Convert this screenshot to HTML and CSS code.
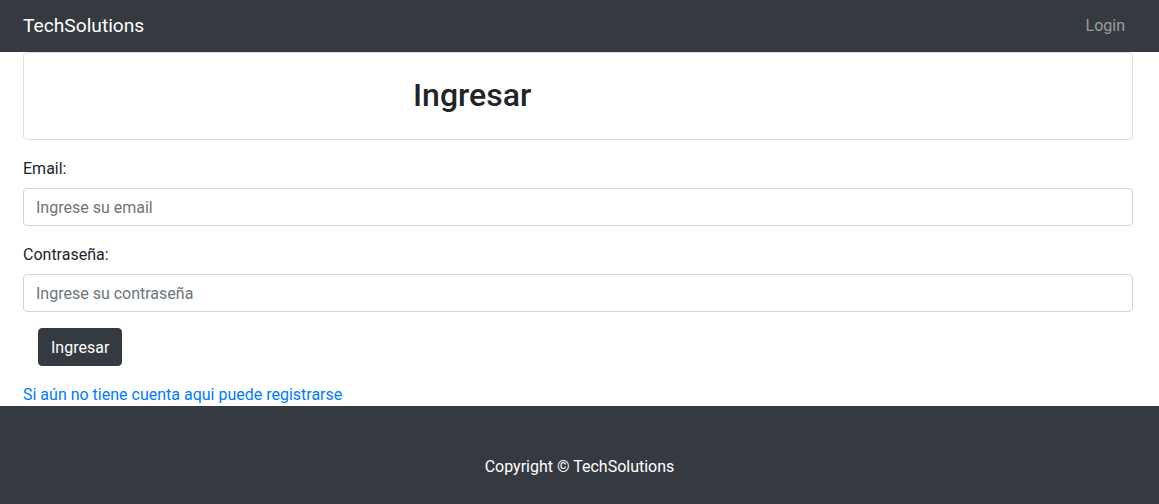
FILE: index.html
```html
<!DOCTYPE html>
<html lang="es">
<head>
<meta charset="utf-8">
<title>TechSolutions - Ingresar</title>
<link rel="stylesheet" href="styles.css">
</head>
<body>
<nav class="navbar">
  <a class="brand" href="#">TechSolutions</a>
  <a class="nav-link" href="#">Login</a>
</nav>
<main class="content">
  <div class="card">
    <h2 class="card-title">Ingresar</h2>
  </div>
  <form class="login-form">
    <div class="form-group">
      <label for="email">Email:</label>
      <input id="email" type="email" class="form-control" placeholder="Ingrese su email">
    </div>
    <div class="form-group">
      <label for="pass">Contraseña:</label>
      <input id="pass" type="password" class="form-control" placeholder="Ingrese su contraseña">
    </div>
    <div class="actions">
      <button type="button" class="btn">Ingresar</button>
    </div>
    <a class="register" href="#">Si aún no tiene cuenta aqui puede registrarse</a>
  </form>
</main>
<footer class="footer">
  <p>Copyright © TechSolutions</p>
</footer>
</body>
</html>
```
FILE: styles.css
```css
* { box-sizing: border-box; }
html, body { margin: 0; padding: 0; }
body {
  font-family: Roboto, "Noto Sans", "Liberation Sans", sans-serif;
  font-size: 16px;
  line-height: 1.5;
  color: #212529;
  background: #fff;
}
.navbar {
  height: 52px;
  background: #343a40;
  display: flex;
  align-items: center;
  justify-content: space-between;
  padding: 0 34px 0 23px;
}
.brand {
  color: #fff;
  font-size: 19.2px;
  text-decoration: none;
  line-height: 30px;
}
.nav-link {
  color: rgba(255,255,255,.5);
  text-decoration: none;
}
.content {
  padding: 0 26px 0 23px;
}
.card {
  border: 1px solid rgba(0,0,0,.125);
  border-radius: 4px;
  padding: 23px 20px 17px 389px;
}
.card-title {
  margin: 0 0 8px;
  font-size: 32px;
  font-weight: 500;
  line-height: 1.2;
}
.login-form {
  padding-top: 16px;
  display: flex;
  flex-direction: column;
}
.form-group {
  display: flex;
  flex-direction: column;
  margin-bottom: 16px;
}
.form-group label {
  padding-top: 1px;
  margin-bottom: 7px;
}
.form-control {
  height: 38px;
  padding: 6px 12px 5px;
  font-family: inherit;
  font-size: 16px;
  color: #495057;
  border: 1px solid #ced4da;
  border-radius: 4px;
  background: #fff;
}
.form-control::placeholder { color: #6c757d; }
.actions {
  padding-left: 15px;
  margin-bottom: 16px;
}
.btn {
  height: 38px;
  padding: 6px 12px;
  font-family: inherit;
  font-size: 16px;
  color: #fff;
  background: #343a40;
  border: 1px solid #343a40;
  border-radius: 4px;
}
.register {
  color: #007bff;
  text-decoration: none;
  align-self: flex-start;
  padding-top: 1px;
  line-height: 23px;
}
.footer {
  background: #343a40;
  color: #fff;
  text-align: center;
  padding: 49px 0 25px;
}
.footer p { margin: 0; }
```
